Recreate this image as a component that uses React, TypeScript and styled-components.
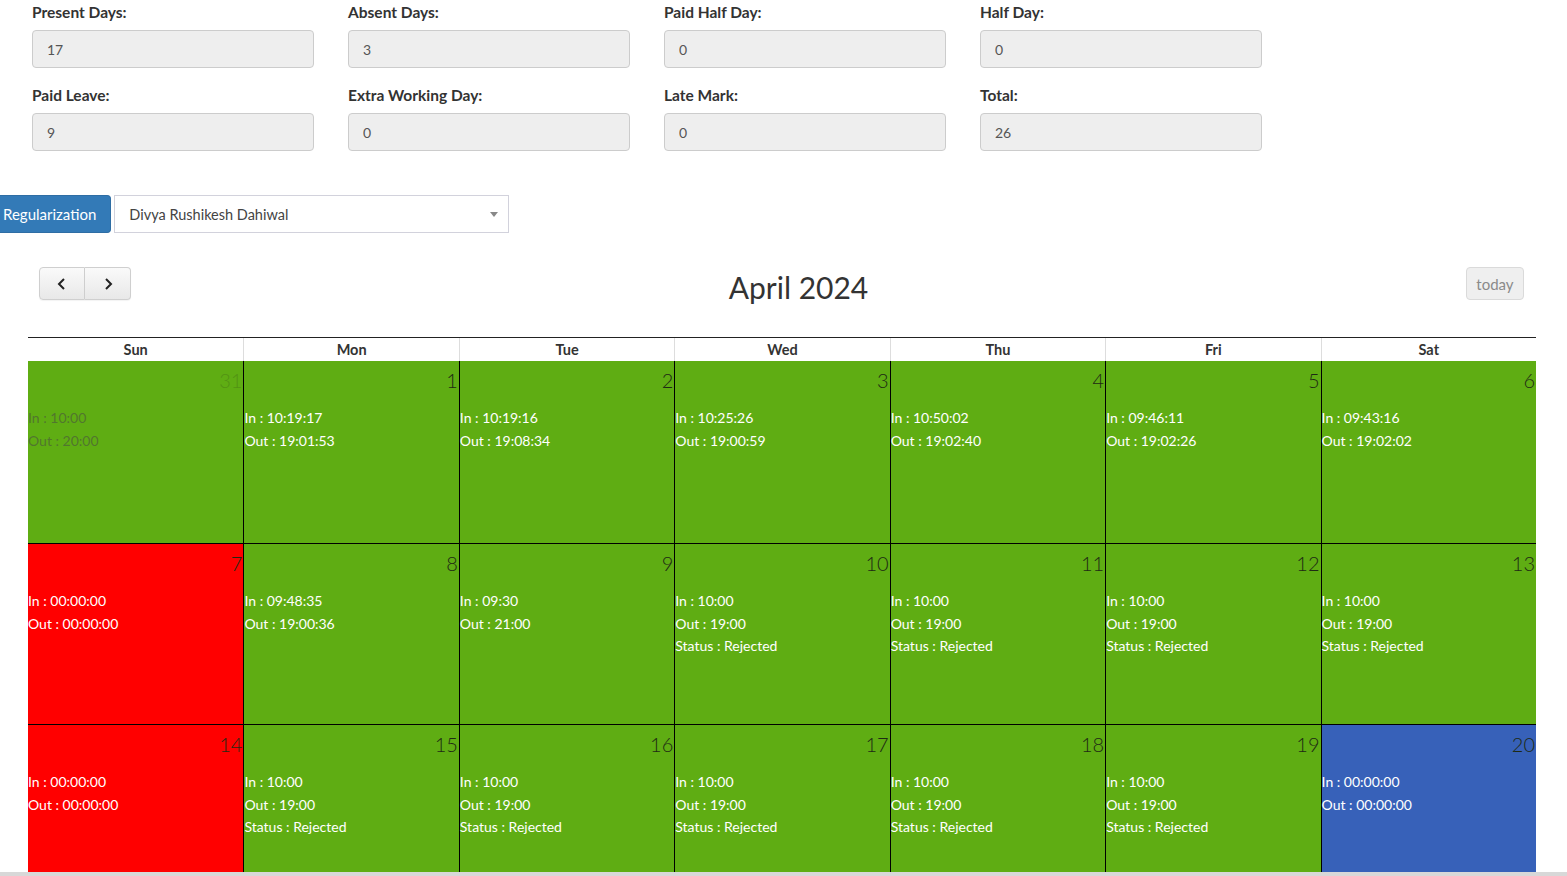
import React from "react";
import styled, { createGlobalStyle } from "styled-components";

type Tone = "green" | "red" | "blue";

interface DayCell {
  day: number;
  tone: Tone;
  lines: string[];
  other?: boolean;
}

const stats = [
  { label: "Present Days:", value: "17" },
  { label: "Absent Days:", value: "3" },
  { label: "Paid Half Day:", value: "0" },
  { label: "Half Day:", value: "0" },
  { label: "Paid Leave:", value: "9" },
  { label: "Extra Working Day:", value: "0" },
  { label: "Late Mark:", value: "0" },
  { label: "Total:", value: "26" },
];

const weekDays = ["Sun", "Mon", "Tue", "Wed", "Thu", "Fri", "Sat"];

const rejected = ["In : 10:00", "Out : 19:00", "Status : Rejected"];
const zero = ["In : 00:00:00", "Out : 00:00:00"];

const weeks: DayCell[][] = [
  [
    { day: 31, tone: "green", lines: ["In : 10:00", "Out : 20:00"], other: true },
    { day: 1, tone: "green", lines: ["In : 10:19:17", "Out : 19:01:53"] },
    { day: 2, tone: "green", lines: ["In : 10:19:16", "Out : 19:08:34"] },
    { day: 3, tone: "green", lines: ["In : 10:25:26", "Out : 19:00:59"] },
    { day: 4, tone: "green", lines: ["In : 10:50:02", "Out : 19:02:40"] },
    { day: 5, tone: "green", lines: ["In : 09:46:11", "Out : 19:02:26"] },
    { day: 6, tone: "green", lines: ["In : 09:43:16", "Out : 19:02:02"] },
  ],
  [
    { day: 7, tone: "red", lines: zero },
    { day: 8, tone: "green", lines: ["In : 09:48:35", "Out : 19:00:36"] },
    { day: 9, tone: "green", lines: ["In : 09:30", "Out : 21:00"] },
    { day: 10, tone: "green", lines: rejected },
    { day: 11, tone: "green", lines: rejected },
    { day: 12, tone: "green", lines: rejected },
    { day: 13, tone: "green", lines: rejected },
  ],
  [
    { day: 14, tone: "red", lines: zero },
    { day: 15, tone: "green", lines: rejected },
    { day: 16, tone: "green", lines: rejected },
    { day: 17, tone: "green", lines: rejected },
    { day: 18, tone: "green", lines: rejected },
    { day: 19, tone: "green", lines: rejected },
    { day: 20, tone: "blue", lines: zero },
  ],
];

const toneColors: Record<Tone, string> = {
  green: "#5fad13",
  red: "#ff0000",
  blue: "#3761b9",
};

const App = () => {
  return (
    <Page>
      <GlobalStyle />
      <StatsGrid>
        {stats.map((s) => (
          <Field key={s.label}>
            <FieldLabel>{s.label}</FieldLabel>
            <FieldInput value={s.value} readOnly disabled />
          </Field>
        ))}
      </StatsGrid>

      <FilterRow>
        <RegButton>Regularization</RegButton>
        <EmployeeSelect>
          <span>Divya Rushikesh Dahiwal</span>
          <Caret />
        </EmployeeSelect>
      </FilterRow>

      <CalendarWrap>
        <Toolbar>
          <NavGroup>
            <NavButton $first>
              <svg width="14" height="14" viewBox="0 0 14 14">
                <path d="M9 2 L4 7 L9 12" fill="none" stroke="#222" strokeWidth="2" />
              </svg>
            </NavButton>
            <NavButton>
              <svg width="14" height="14" viewBox="0 0 14 14">
                <path d="M5 2 L10 7 L5 12" fill="none" stroke="#222" strokeWidth="2" />
              </svg>
            </NavButton>
          </NavGroup>
          <Title>April 2024</Title>
          <TodayButton disabled>today</TodayButton>
        </Toolbar>

        <HeaderRow>
          {weekDays.map((d) => (
            <HeaderCell key={d}>{d}</HeaderCell>
          ))}
        </HeaderRow>

        {weeks.map((week, wi) => (
          <WeekRow key={wi} $first={wi === 0}>
            {week.map((cell) => (
              <Cell key={cell.day} $tone={cell.tone} $first={wi === 0}>
                <DayNumber $other={cell.other}>{cell.day}</DayNumber>
                <Events $other={cell.other}>
                  {cell.lines.map((l) => (
                    <div key={l}>{l}</div>
                  ))}
                </Events>
              </Cell>
            ))}
          </WeekRow>
        ))}
      </CalendarWrap>
      <ScrollStrip />
    </Page>
  );
};

const GlobalStyle = createGlobalStyle`
  html, body {
    margin: 0;
    padding: 0;
    background: #fff;
    overflow: hidden;
  }
  body {
    font-family: Lato, "Liberation Sans", sans-serif;
    color: #333;
  }
`;

const Page = styled.div`
  padding-top: 4px;
`;

const StatsGrid = styled.div`
  display: grid;
  grid-template-columns: repeat(4, 282px);
  column-gap: 34px;
  row-gap: 19px;
  padding-left: 32px;
`;

const Field = styled.div`
  display: flex;
  flex-direction: column;
  gap: 9px;
`;

const FieldLabel = styled.label`
  font-size: 15.5px;
  font-weight: 700;
  line-height: 17px;
  color: #333;
`;

const FieldInput = styled.input`
  box-sizing: border-box;
  height: 38px;
  width: 100%;
  padding: 0 14px;
  font-family: inherit;
  font-size: 14px;
  color: #555;
  background: #eee;
  border: 1px solid #ccc;
  border-radius: 4px;
  opacity: 1;
  -webkit-text-fill-color: #555;
`;

const FilterRow = styled.div`
  display: flex;
  align-items: center;
  gap: 3px;
  margin-top: 44px;
`;

const RegButton = styled.button`
  height: 38px;
  padding: 0 14px 0 3px;
  background: #337ab7;
  color: #fff;
  font-family: inherit;
  font-size: 15px;
  border: 1px solid #2e6da4;
  border-left: none;
  border-radius: 0 4px 4px 0;
`;

const EmployeeSelect = styled.div`
  box-sizing: border-box;
  width: 395px;
  height: 38px;
  display: flex;
  align-items: center;
  justify-content: space-between;
  padding: 0 10px 0 14px;
  border: 1px solid #d2d2dc;
  font-size: 14.5px;
  color: #444;
  background: #fff;
`;

const Caret = styled.span`
  width: 0;
  height: 0;
  border-left: 4px solid transparent;
  border-right: 4px solid transparent;
  border-top: 5px solid #888;
`;

const CalendarWrap = styled.div`
  margin: 34px 31px 0 28px;
`;

const Toolbar = styled.div`
  display: flex;
  align-items: center;
  justify-content: space-between;
  height: 33px;
  padding: 0 12px 0 11px;
  margin-bottom: 37px;
`;

const NavGroup = styled.div`
  display: flex;
`;

const NavButton = styled.button<{ $first?: boolean }>`
  width: 46px;
  height: 33px;
  display: flex;
  align-items: center;
  justify-content: center;
  background: linear-gradient(#fafafa, #e8e8e8);
  border: 1px solid #cfcfcf;
  border-radius: ${({ $first }) => ($first ? "4px 0 0 4px" : "0 4px 4px 0")};
  ${({ $first }) => !$first && "border-left: none;"}
  box-shadow: 0 1px 1px rgba(0, 0, 0, 0.05);
  padding: 0;
`;

const Title = styled.h2`
  margin: 6px 0 0;
  font-size: 30px;
  font-weight: 400;
  color: #333;
`;

const TodayButton = styled.button`
  width: 58px;
  height: 33px;
  font-family: inherit;
  font-size: 15px;
  color: #8a8a8a;
  background: #efefef;
  border: 1px solid #dadada;
  border-radius: 4px;
`;

const HeaderRow = styled.div`
  display: grid;
  grid-template-columns: repeat(7, 1fr);
  border-top: 1px solid #222;
`;

const HeaderCell = styled.div`
  height: 23px;
  line-height: 23px;
  text-align: center;
  font-size: 14.5px;
  font-weight: 700;
  color: #333;
  & + & {
    border-left: 1px solid #ddd;
  }
`;

const WeekRow = styled.div<{ $first?: boolean }>`
  display: grid;
  grid-template-columns: repeat(7, 1fr);
  ${({ $first }) => !$first && "border-top: 1px solid #000;"}
`;

const Cell = styled.div<{ $tone: Tone; $first?: boolean }>`
  height: ${({ $first }) => ($first ? "182px" : "180px")};
  background: ${({ $tone }) => toneColors[$tone]};
  & + & {
    border-left: 1px solid #000;
  }
`;

const DayNumber = styled.div<{ $other?: boolean }>`
  text-align: right;
  padding: 5px 1px 0 0;
  font-size: 20px;
  font-weight: 300;
  line-height: 29px;
  color: #1e2a14;
  opacity: ${({ $other }) => ($other ? 0.2 : 1)};
`;

const Events = styled.div<{ $other?: boolean }>`
  margin-top: 12px;
  font-size: 14px;
  line-height: 22.5px;
  color: ${({ $other }) => ($other ? "rgba(70, 70, 70, 0.55)" : "#fff")};
`;

const ScrollStrip = styled.div`
  position: fixed;
  left: 0;
  right: 0;
  bottom: 0;
  height: 4px;
  background: #d8d8d8;
`;

export default App;
